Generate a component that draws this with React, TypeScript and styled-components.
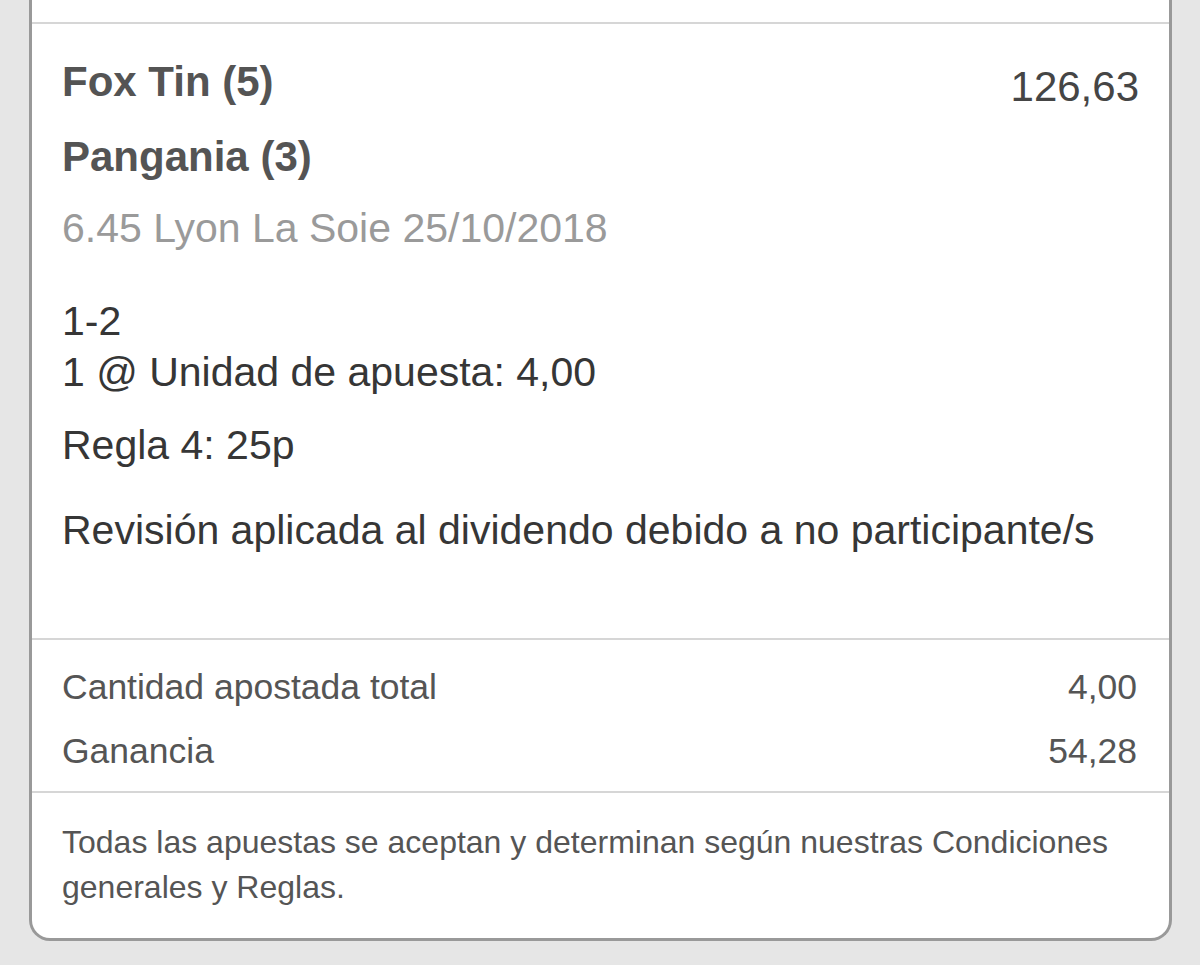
import React from "react";
import styled, { createGlobalStyle } from "styled-components";

const GlobalStyle = createGlobalStyle`
  html, body {
    margin: 0;
    padding: 0;
    background: #e6e6e6;
  }
  body {
    font-family: "Liberation Sans", Arial, Helvetica, sans-serif;
  }
`;

const Page = styled.div`
  padding: 0 28px 25px 29px;
`;

const Card = styled.div`
  background: #fff;
  border: 3px solid #999;
  border-top: none;
  border-radius: 0 0 21px 21px;
  overflow: hidden;
`;

const Section = styled.div<{ $top: number; $bottom: number; $left: number; $right: number }>`
  padding: ${(p) => p.$top}px ${(p) => p.$right}px ${(p) => p.$bottom}px
    ${(p) => p.$left}px;
  border-top: 2px solid #d6d6d6;
`;

const PreviousSection = styled.div`
  height: 22px;
`;

const HeaderRow = styled.div`
  display: flex;
  justify-content: space-between;
  align-items: flex-start;
`;

const Runners = styled.div`
  display: flex;
  flex-direction: column;
  gap: 25px;
`;

const Runner = styled.div`
  font-size: 42px;
  line-height: 50px;
  font-weight: 700;
  color: #545454;
`;

const Price = styled.div`
  font-size: 42px;
  line-height: 50px;
  color: #454545;
  margin-top: 5px;
`;

const Meeting = styled.div`
  font-size: 41px;
  line-height: 50px;
  color: #9a9a9a;
  margin-top: 21px;
`;

const Line = styled.div<{ $gap?: number; $height?: number }>`
  font-size: 41px;
  line-height: ${(p) => p.$height ?? 50}px;
  color: #363636;
  margin-top: ${(p) => p.$gap ?? 0}px;
`;

const SummaryRow = styled.div`
  display: flex;
  justify-content: space-between;
  font-size: 35.5px;
  line-height: 64px;
  color: #555;
`;

const Terms = styled.p`
  margin: 0;
  font-size: 32px;
  line-height: 45px;
  color: #555;
`;

export default function App() {
  return (
    <Page>
      <GlobalStyle />
      <Card>
        <PreviousSection />
        <Section $top={33} $bottom={83} $left={30} $right={30}>
          <HeaderRow>
            <Runners>
              <Runner>Fox Tin (5)</Runner>
              <Runner>Pangania (3)</Runner>
            </Runners>
            <Price>126,63</Price>
          </HeaderRow>
          <Meeting>6.45 Lyon La Soie 25/10/2018</Meeting>
          <Line $gap={43} $height={51}>1-2</Line>
          <Line $height={51}>1 @ Unidad de apuesta: 4,00</Line>
          <Line $gap={22}>Regla 4: 25p</Line>
          <Line $gap={35}>Revisión aplicada al dividendo debido a no participante/s</Line>
        </Section>
        <Section $top={15} $bottom={8} $left={30} $right={32}>
          <SummaryRow>
            <span>Cantidad apostada total</span>
            <span>4,00</span>
          </SummaryRow>
          <SummaryRow>
            <span>Ganancia</span>
            <span>54,28</span>
          </SummaryRow>
        </Section>
        <Section $top={27} $bottom={28} $left={30} $right={30}>
          <Terms>
            Todas las apuestas se aceptan y determinan según nuestras Condiciones
            generales y Reglas.
          </Terms>
        </Section>
      </Card>
    </Page>
  );
}
